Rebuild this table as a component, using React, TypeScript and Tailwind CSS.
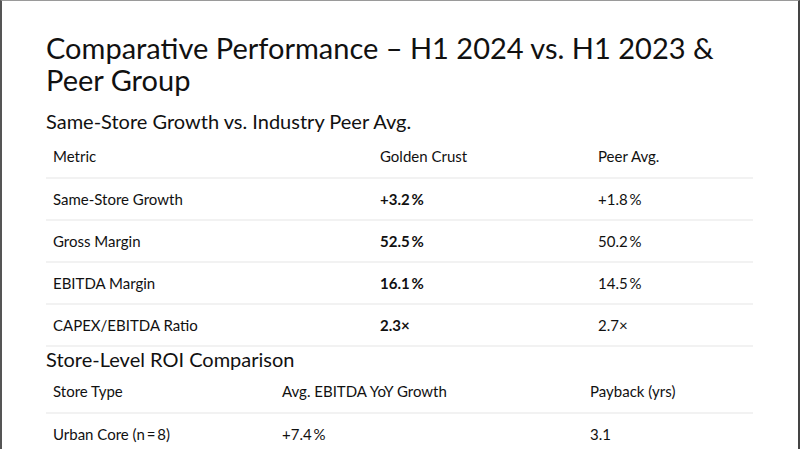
const metrics = [
  { label: "Same-Store Growth", ours: "+3.2\u2009%", peer: "+1.8\u2009%" },
  { label: "Gross Margin", ours: "52.5\u2009%", peer: "50.2\u2009%" },
  { label: "EBITDA Margin", ours: "16.1\u2009%", peer: "14.5\u2009%" },
  { label: "CAPEX/EBITDA Ratio", ours: "2.3×", peer: "2.7×" },
];

const stores = [{ type: "Urban Core (n\u2009=\u20098)", growth: "+7.4\u2009%", payback: "3.1" }];

export default function App() {
  return (
    <div
      className="w-[800px] h-[449px] overflow-hidden bg-white border-t border-l-2 border-r-2 border-t-[#9a9a9a] border-l-[#555] border-r-[#444] text-[#111]"
      style={{ fontFamily: "Lato, 'Noto Sans', sans-serif" }}
    >
      <div className="pl-[44px] pr-[45px] pt-[31px]">
        <h1 className="text-[29px] leading-[32px] font-normal">
          Comparative Performance – H1 2024 vs. H1 2023 &amp;
          <br />
          Peer Group
        </h1>
        <h2 className="mt-[12px] text-[20px] leading-[26px]">Same-Store Growth vs. Industry Peer Avg.</h2>

        <table className="w-full mt-[2px] text-[15px] border-collapse">
          <thead>
            <tr className="h-[42px] border-b-2 border-[#f2f2f2]">
              <th className="text-left font-normal pl-[7px] w-[327px]">Metric</th>
              <th className="text-left font-normal pl-[7px] w-[218px]">Golden Crust</th>
              <th className="text-left font-normal pl-[7px]">Peer Avg.</th>
            </tr>
          </thead>
          <tbody>
            {metrics.map((m) => (
              <tr key={m.label} className="h-[42px] border-b-2 border-[#f2f2f2]">
                <td className="pl-[7px]">{m.label}</td>
                <td className="pl-[7px] font-bold">{m.ours}</td>
                <td className="pl-[7px]">{m.peer}</td>
              </tr>
            ))}
          </tbody>
        </table>

        <h2 className="text-[20px] leading-[24px]">Store-Level ROI Comparison</h2>

        <table className="w-full text-[15px] border-collapse">
          <thead>
            <tr className="h-[42px] border-b-2 border-[#f2f2f2]">
              <th className="text-left font-normal pl-[7px] w-[229px]">Store Type</th>
              <th className="text-left font-normal pl-[7px] w-[308px]">Avg. EBITDA YoY Growth</th>
              <th className="text-left font-normal pl-[7px]">Payback (yrs)</th>
            </tr>
          </thead>
          <tbody>
            {stores.map((s) => (
              <tr key={s.type} className="h-[42px] border-b-2 border-[#f2f2f2]">
                <td className="pl-[7px]">{s.type}</td>
                <td className="pl-[7px]">{s.growth}</td>
                <td className="pl-[7px]">{s.payback}</td>
              </tr>
            ))}
          </tbody>
        </table>
      </div>
    </div>
  );
}
